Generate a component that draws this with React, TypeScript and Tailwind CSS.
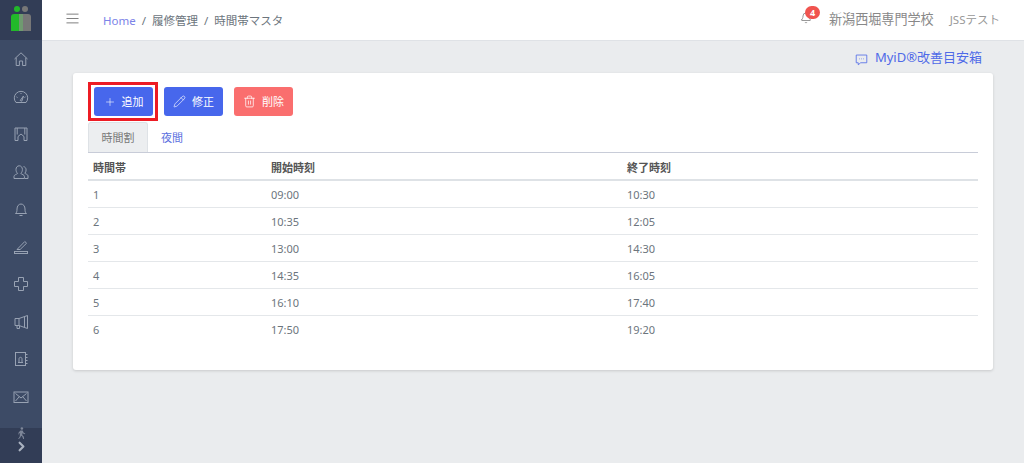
import { AlignJustify, Bell, Plus, ChevronRight, Pencil, Trash2 } from "lucide-react";

const rows = [
  ["1", "09:00", "10:30"],
  ["2", "10:35", "12:05"],
  ["3", "13:00", "14:30"],
  ["4", "14:35", "16:05"],
  ["5", "16:10", "17:40"],
  ["6", "17:50", "19:20"],
];

// outline drawings of the side menu, 16x16 box
const navIcons = [
  <path key="home" d="M1.500 8 8 1.800 14.500 8M3.200 6.800v7.700h3.200V10h3.200v4.500h3.200V6.800" />,
  <>
    <path d="M3 13.500a6.700 6.700 0 1 1 10 0zM4.500 8.500l-1-.6M8 5V4M11.500 8.500l1-.6" />
    <path d="M7.200 11.500 10.500 7l-1.700 5.200z" />
  </>,
  <path d="M2 2h12v12.500h-3V10.500L8 8l-3 2.500v4H2zM4.200 2v6.500M11.800 2v6.500" />,
  <>
    <path d="M1 14.500v-2.200c0-1.400 2.600-2 3.600-2.800-1-1-1.600-2.300-1.600-4C3 3.200 4.400 1.800 6.200 1.800s3.200 1.400 3.200 3.700c0 1.700-.6 3-1.600 4 1 .8 3.600 1.400 3.600 2.800v2.200z" />
    <path d="M10.500 2.600c1.500.2 2.600 1.500 2.600 3.300 0 1.500-.5 2.600-1.300 3.400.9.7 3.200 1.200 3.200 2.500v2.700h-3.400" />
  </>,
  <>
    <path d="M2.500 12.500c1.200-1 1.500-2 1.500-4.500 0-2.800 1.700-5 4-5s4 2.200 4 5c0 2.500.3 3.500 1.500 4.500z" />
    <path d="M6.500 14.500h3" />
  </>,
  <>
    <path d="M4 10.500 11.800 2.500l1.800 1.700-6.500 6.300H4z" />
    <rect x="1.500" y="12.500" width="13" height="2" />
  </>,
  <path d="M5.500 1.500h5v4h4v5h-4v4h-5v-4h-4v-5h4z" />,
  <>
    <path d="M14.500 1.500v13L6 11.500H2v-7h4zM6 4.500v7M11.500 3v10" />
    <path d="M4 11.500v3h2.500v-2.500" />
  </>,
  <>
    <rect x="2.500" y="1.500" width="10" height="13" />
    <path d="M5 11.500h5M6 11.500V8.200C6 7 6.500 6.300 7.500 6.300S9 7 9 8.200v3.300M14.500 3.500h-2M14.500 6.500h-2M14.500 9.500h-2M14.500 12.500h-2" />
  </>,
  <>
    <rect x="1" y="3" width="14" height="10.500" />
    <path d="M2.500 4.500 8 9l5.500-4.500M2.500 12l3.800-4.300M13.500 12 9.700 7.700" />
  </>,
];

function Sidebar() {
  return (
    <aside className="flex h-[463px] w-[42px] shrink-0 flex-col bg-[#3d4b66]">
      <div className="flex h-10 items-start justify-center bg-[#323d56] pt-[5px]">
        <svg width="20" height="26" viewBox="0 0 20 26">
          <circle cx="6" cy="4" r="3" fill="#22b92a" />
          <circle cx="14" cy="4" r="3" fill="#777" />
          <path d="M0 12a3 3 0 0 1 3-3h5v17H0z" fill="#22b92a" />
          <rect x="8" y="9" width="4" height="17" fill="#6f9a70" />
          <path d="M12 9h5a3 3 0 0 1 3 3v14h-8z" fill="#777" />
        </svg>
      </div>
      <div className="flex flex-1 flex-col items-center gap-[21.5px] pt-[11px]">
        {navIcons.map((icon, i) => (
          <svg key={i} viewBox="0 0 16 16" fill="none" stroke="#98a2b3" strokeWidth="1" className="h-4 w-4 shrink-0">
            {icon}
          </svg>
        ))}
      </div>
      <div className="flex h-[35px] flex-col items-center bg-[#323d56]">
        <svg viewBox="0 0 12 16" className="-mt-px h-[12px] w-[9px] shrink-0" fill="#7e8799">
          <circle cx="6.500" cy="2" r="1.700" />
          <path d="M4.500 4.500h3l1.500 3 2 1-.5 1-2.500-1-.5-1-.5 3 2 2 .5 3.500h-1.200L7 12.500l-1.500-1-1 2.500-2 2H1.500l2-3 .5-3.500.2-2-1.200 1V10H2V7.500z" />
        </svg>
        <ChevronRight size={15} strokeWidth={3.5} className="text-[#aab2c0]" />
      </div>
    </aside>
  );
}

function Header() {
  return (
    <header className="flex h-[41px] shrink-0 items-center border-b border-[#dfe2e6] bg-white pl-[23px] pr-6">
      <AlignJustify size={15} strokeWidth={1.5} className="-mt-[3px] text-[#777]" />
      <nav className="ml-[23px] flex items-center pt-px text-[11.5px] text-[#6c757d]">
        <span className="text-[#7c83e8]">Home</span>
        <span className="mx-[6px]">/</span>
        <span>履修管理</span>
        <span className="mx-[6px]">/</span>
        <span>時間帯マスタ</span>
      </nav>
      <div className="ml-auto flex items-center">
        <div className="relative -mt-[3px] mr-[17px]">
          <Bell size={12} strokeWidth={1.5} className="text-[#777]" />
          <span className="absolute left-[5px] top-[-6px] flex h-[13px] w-[15px] items-center justify-center rounded-full bg-[#f0544f] text-[9px] font-bold text-white">4</span>
        </div>
        <span className="text-[13.1px] text-[#888]">新潟西堀専門学校</span>
        <span className="ml-4 text-[11.5px] text-[#999]">JSSテスト</span>
      </div>
    </header>
  );
}

function ActionButton({ children, icon, className }: { children: React.ReactNode; icon: React.ReactNode; className: string }) {
  return (
    <button className={`flex h-[29px] w-[59px] items-center justify-center gap-[6px] rounded-[3px] text-[11px] text-white ${className}`}>
      {icon}
      <span className="pt-px">{children}</span>
    </button>
  );
}

function TimeTable() {
  return (
    <table className="w-full border-collapse text-[11px] text-[#6c757d]">
      <thead>
        <tr className="h-[27px] border-b-2 border-[#dee2e6] text-left text-[#555]">
          <th className="w-[183px] pl-[5px] pt-1 font-bold">時間帯</th>
          <th className="w-[356px] pt-1 font-bold">開始時刻</th>
          <th className="pt-1 font-bold">終了時刻</th>
        </tr>
      </thead>
      <tbody>
        {rows.map((row) => (
          <tr key={row[0]} className="h-[27px] border-b border-[#e4e7ea] last:border-b-0">
            <td className="pl-[5px] pt-[3px]">{row[0]}</td>
            <td className="pt-[3px]">{row[1]}</td>
            <td className="pt-[3px]">{row[2]}</td>
          </tr>
        ))}
      </tbody>
    </table>
  );
}

export default function App() {
  return (
    <div className="flex h-[463px] w-[1024px] overflow-hidden bg-[#eaecee] font-['Noto_Sans','Noto_Sans_CJK_JP',sans-serif]">
      <Sidebar />
      <div className="flex min-w-0 flex-1 flex-col">
        <Header />
        <div className="flex h-8 shrink-0 items-center justify-end pr-[42px] pt-[2px] text-[13px] text-[#4f6ae8]">
          <svg viewBox="0 0 16 16" fill="none" stroke="currentColor" strokeWidth="1" className="mr-[7px] mt-[3px] h-[13px] w-[13px]">
            <path d="M1.500 2.500h13v9.500H7l-3 2.500V12H1.500z" />
            <path d="M5 7.200h.8M7.600 7.200h.8M10.200 7.200h.8" />
          </svg>
          MyiD®改善目安箱
        </div>
        <main className="mx-[31px] h-[297px] rounded-[3px] bg-white px-[15px] pt-[9px] shadow-[0_1px_3px_rgba(0,0,0,0.15)]">
          <div className="flex items-center">
            <div className="border-[3px] border-[#ed1c24] py-[2px] pl-[3px] pr-[2px]">
              <ActionButton className="bg-[#4767ec]" icon={<Plus size={12} strokeWidth={1.2} />}>追加</ActionButton>
            </div>
            <ActionButton className="ml-[6px] bg-[#4767ec]" icon={<Pencil size={13} strokeWidth={1.2} />}>修正</ActionButton>
            <ActionButton className="ml-[11px] bg-[#fa6e6e]" icon={<Trash2 size={13} strokeWidth={1.4} />}>削除</ActionButton>
          </div>
          <div className="flex h-8 items-end border-b border-[#c8ccd8] text-[11px]">
            <div className="flex h-[30px] w-[60px] items-center justify-center rounded-t-[3px] border border-b-0 border-[#dee2e6] bg-[#eceef0] pt-[2px] text-[#777]">時間割</div>
            <div className="flex h-[30px] w-[48px] items-center justify-center pt-[2px] text-[#5a6fe0]">夜間</div>
          </div>
          <TimeTable />
        </main>
      </div>
    </div>
  );
}
